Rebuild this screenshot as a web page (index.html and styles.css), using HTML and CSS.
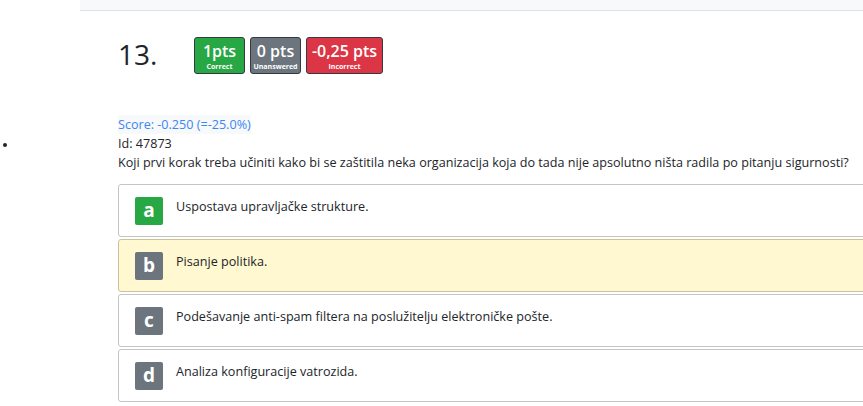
FILE: index.html
```html
<!DOCTYPE html>
<html>
<head>
<meta charset="utf-8">
<link rel="stylesheet" href="styles.css">
</head>
<body>
<div class="topbar"></div>
<div class="page">
  <div class="marker-col"><span class="bullet"></span></div>
  <div class="content">
    <div class="head">
      <div class="qnum">13.</div>
      <div class="badges">
        <div class="badge green"><span class="big">1pts</span><span class="small">Correct</span></div>
        <div class="badge gray"><span class="big">0 pts</span><span class="small">Unanswered</span></div>
        <div class="badge red"><span class="big">-0,25 pts</span><span class="small">Incorrect</span></div>
      </div>
    </div>
    <div class="score">Score: -0.250 (=-25.0%)</div>
    <div class="line">Id: 47873</div>
    <div class="line">Koji prvi korak treba učiniti kako bi se zaštitila neka organizacija koja do tada nije apsolutno ništa radila po pitanju sigurnosti?</div>
    <div class="answers">
      <div class="answer"><span class="letter l-green">a</span><span class="atext">Uspostava upravljačke strukture.</span></div>
      <div class="answer selected"><span class="letter l-gray">b</span><span class="atext">Pisanje politika.</span></div>
      <div class="answer"><span class="letter l-gray">c</span><span class="atext">Podešavanje anti-spam filtera na poslužitelju elektroničke pošte.</span></div>
      <div class="answer"><span class="letter l-gray">d</span><span class="atext">Analiza konfiguracije vatrozida.</span></div>
    </div>
  </div>
</div>
</body>
</html>
```
FILE: styles.css
```css
html, body {
  margin: 0;
  padding: 0;
  overflow: hidden;
  background: #fff;
}
body {
  font-family: "Open Sans", "Noto Sans", sans-serif;
  color: #212529;
  width: 863px;
  height: 406px;
}
.topbar {
  margin-left: 80px;
  height: 10px;
  background: #f8f9fa;
  border-bottom: 1px solid #dee2e6;
}
.page {
  display: flex;
}
.marker-col {
  width: 118px;
  flex: none;
  position: relative;
}
.bullet {
  position: absolute;
  left: 3px;
  top: 132px;
  width: 4px;
  height: 4px;
  border-radius: 50%;
  background: #212529;
}
.content {
  flex: none;
  width: 760px;
}
.head {
  display: flex;
  align-items: flex-start;
  margin-top: 26px;
  height: 75px;
}
.qnum {
  font-family: "Open Sans", sans-serif;
  font-size: 28px;
  line-height: 38px;
  width: 76px;
  margin-top: -2px;
  color: #212529;
}
.badges {
  display: flex;
  gap: 5px;
}
.badge {
  display: flex;
  flex-direction: column;
  align-items: center;
  height: 35px;
  border: 1px solid #343a40;
  border-radius: 3px;
  color: #fff;
  padding: 0 4px;
  box-sizing: content-box;
}
.badge .big {
  font-size: 16px;
  line-height: 22px;
  margin-top: 2px;
  font-weight: 600;
  white-space: nowrap;
}
.badge .small {
  font-size: 7px;
  line-height: 9px;
  font-weight: 700;
}
.green { background: #28a745; width: 41px; }
.gray { background: #6c757d; width: 41px; }
.red { background: #dc3545; width: 67px; }
.score {
  font-size: 12.6px;
  line-height: 19px;
  color: #3b87f5;
  display: inline-block;
  background: #f8f9fa;
}
.line {
  font-size: 12.6px;
  line-height: 19px;
  white-space: nowrap;
}
.answers {
  margin-top: 12px;
  display: flex;
  flex-direction: column;
  gap: 2px;
}
.answer {
  display: flex;
  align-items: flex-start;
  height: 53px;
  border: 1px solid #c4c4c4;
  border-radius: 3px;
  padding: 12px 0 0 16px;
  box-sizing: border-box;
  background: #fff;
}
.answer.selected {
  background: #fff8d1;
  border-color: #cac39a;
}
.letter {
  width: 28px;
  height: 28px;
  border-radius: 2px;
  color: #fff;
  font-weight: 700;
  font-size: 19px;
  line-height: 27px;
  text-align: center;
  flex: none;
}
.l-green { background: #28a745; }
.l-gray { background: #6c757d; }
.atext {
  margin-left: 13px;
  font-size: 12.6px;
  line-height: 19px;
  margin-top: 0;
}
```
